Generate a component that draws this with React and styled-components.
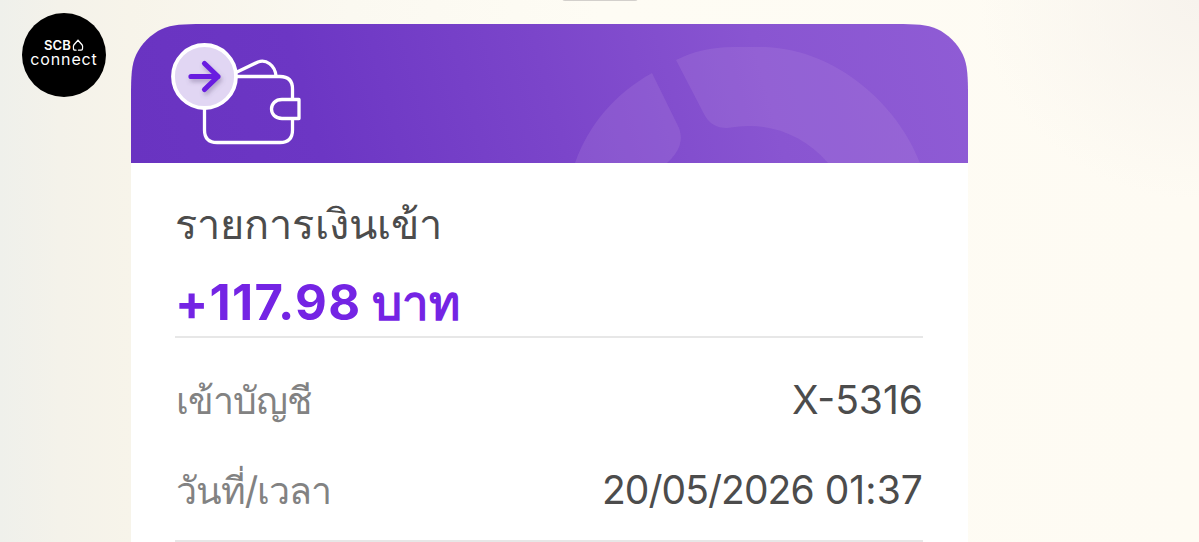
import React from "react";
import styled, { createGlobalStyle } from "styled-components";

const GlobalStyle = createGlobalStyle`
  * { box-sizing: border-box; }
  body { margin: 0; overflow: hidden; background: #fdfbf4; }
`;

const Chat = styled.main`
  position: relative;
  display: flex;
  align-items: flex-start;
  width: 1199px;
  height: 542px;
  overflow: hidden;
  padding: 13px 0 0 22px;
  font-family: Inter, sans-serif;
  background:
    radial-gradient(ellipse 220px 200px at 1199px 0, #f7f3ed 0%, transparent 100%),
    linear-gradient(90deg, #eff0eb 0, #f4f2ea 60px, #f7f4ea 130px, #fbf9f1 350px, #fefcf4 600px, #fefbf3 100%);
`;

const PreviousBubble = styled.div`
  position: absolute;
  top: -5px;
  left: 562px;
  width: 76px;
  height: 6px;
  border-radius: 3px;
  background: #d3d0cc;
`;

const Avatar = styled.div`
  flex: none;
  display: flex;
  flex-direction: column;
  align-items: center;
  width: 84px;
  height: 84px;
  padding-top: 26px;
  border-radius: 50%;
  background: #000;
  color: #fff;
`;

const Brand = styled.div`
  display: flex;
  align-items: center;
  gap: 1px;
  height: 13px;
  font: 600 13px/13px Inter, sans-serif;
  letter-spacing: 0.1px;
`;

const BrandName = styled.div`
  font: 400 16px/14px Inter, sans-serif;
  letter-spacing: 0.85px;
`;

const Card = styled.article`
  flex: none;
  width: 837px;
  height: 540px;
  margin: 11px 0 0 25px;
  background: linear-gradient(transparent 100px, #fff 100px);
`;

const Banner = styled.header`
  height: 139px;
  background: linear-gradient(75deg, #6933c1 0%, #6c36c4 22%, #7b45ca 50%, #8955d1 75%, #8f5cd5 100%);
  clip-path: path("M0 139 V72 C0 52 .5 41 5 31 C10 20 20 10 31 5 C41 .5 52 0 72 0 H765 C785 0 796 .5 806 5 C817 10 827 20 832 31 C836.5 41 837 52 837 72 V139 Z");
`;

const Details = styled.section`
  display: flex;
  flex-direction: column;
  padding: 0 45px 0 44px;
`;

const Title = styled.h1`
  height: 94px;
  margin: 0;
  padding-top: 31px;
  color: #4c4c4c;
  font-size: 41.5px;
  font-weight: 400;
  line-height: 61px;
  letter-spacing: 0.1px;
  white-space: nowrap;
`;

const Amount = styled.div`
  display: flex;
  align-items: baseline;
  gap: 11px;
  height: 81px;
  padding-top: 16px;
  border-bottom: 2px solid #e7e7e7;
  color: #7424e4;
  font-size: 49px;
  font-weight: 700;
  line-height: 60px;
  white-space: nowrap;
`;

const Figure = styled.span`
  letter-spacing: 1.3px;
`;

const Unit = styled.span`
  font-size: 47.5px;
`;

const Rows = styled.dl`
  display: flex;
  flex-direction: column;
  height: 204px;
  margin: 0;
  padding-top: 17px;
  border-bottom: 2px solid #e7e7e7;
`;

const Row = styled.div`
  display: flex;
  justify-content: space-between;
  align-items: baseline;
  height: 90px;
  line-height: 90px;
  white-space: nowrap;
`;

const Label = styled.dt`
  margin-left: 1px;
  color: #828282;
  font-size: 37.5px;
  letter-spacing: -1.1px;
`;

const Value = styled.dd`
  display: flex;
  gap: 11px;
  margin: 0;
  color: #4c4c4c;
  font-size: 39px;
`;

const Run = styled.span`
  letter-spacing: ${({ $tracking }) => $tracking}px;
`;

function HouseMark() {
  return (
    <svg width="12" height="13" viewBox="0 0 12 13" fill="none" stroke="#fff" strokeWidth="1.3" strokeLinecap="round">
      <path d="M4 11.2H2.8Q1.5 11.2 1.5 9.8Q.8 7.5 2 5.7L6 1.3L10 5.7Q11.2 7.5 10.5 9.8Q10.5 11.2 9.2 11.2H6.5" />
    </svg>
  );
}

function BannerArt() {
  return (
    <svg width="837" height="139" viewBox="131 24 837 139" fill="none">
      <defs>
        <filter id="arrowShadow" x="-30%" y="-30%" width="170%" height="170%">
          <feDropShadow dx="1.5" dy="3" stdDeviation="2" floodColor="#65547d" floodOpacity=".4" />
        </filter>
      </defs>
      <g fill="#b88fdf" fillOpacity=".22">
        <path d="M575 163C588 126 614 94 652 73L679 128Q686 146 667 163Z" />
        <path d="M676 60C692 52 711 47 733 47H766C837 50 898 105 920 163H828C807 139 779 126 749 126Q740 126 727 128Q711 128 704 114Z" />
      </g>
      <g stroke="#fff" strokeWidth="3.3" strokeLinejoin="round" strokeLinecap="round">
        <path d="M237 72L258 62C266 59 275 65 276 76" />
        <path d="M236 76.5H280Q292.500 76.500 292.500 89V99M292.500 119.500V130Q292.500 142.500 280 142.500H217Q204.500 142.500 204.500 130V106" />
        <path d="M299 99.500H282C268 99.500 268 118.500 282 118.500H299Z" />
      </g>
      <circle cx="204.500" cy="76.500" r="31.500" fill="#e1d6f3" stroke="#fff" strokeWidth="3.8" />
      <path d="M191 76.500H218M204.500 63.500L218 76.500L204.500 89.500" stroke="#691fe0" strokeWidth="5.2" strokeLinecap="round" strokeLinejoin="round" filter="url(#arrowShadow)" />
    </svg>
  );
}

const details = [
  { label: "เข้าบัญชี", value: [{ text: "X-5316", tracking: 0 }] },
  {
    label: "วันที่/เวลา",
    value: [
      { text: "20/05/2026", tracking: -0.95 },
      { text: "01:37", tracking: 0.1 },
    ],
  },
];

export default function App() {
  return (
    <>
      <GlobalStyle />
      <Chat>
        <PreviousBubble />
        <Avatar>
          <Brand>SCB<HouseMark /></Brand>
          <BrandName>connect</BrandName>
        </Avatar>
        <Card>
          <Banner><BannerArt /></Banner>
          <Details>
            <Title>รายการเงินเข้า</Title>
            <Amount><Figure>+117.98</Figure><Unit>บาท</Unit></Amount>
            <Rows>
              {details.map(({ label, value }) => (
                <Row key={label}>
                  <Label>{label}</Label>
                  <Value>
                    {value.map(({ text, tracking }) => (
                      <Run key={text} $tracking={tracking}>{text}</Run>
                    ))}
                  </Value>
                </Row>
              ))}
            </Rows>
          </Details>
        </Card>
      </Chat>
    </>
  );
}
